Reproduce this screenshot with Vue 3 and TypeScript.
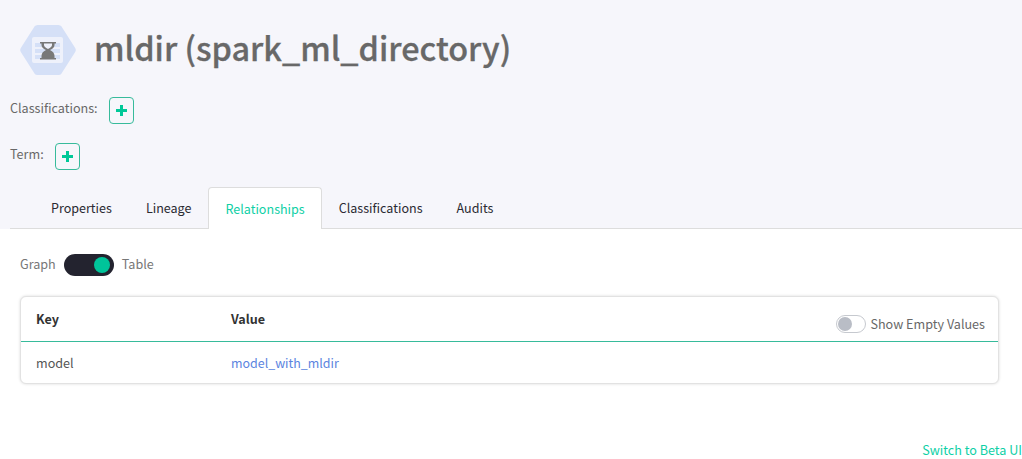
<script setup lang="ts">
const tabs: string[] = ['Properties', 'Lineage', 'Relationships', 'Classifications', 'Audits']
const active = 'Relationships'
</script>

<template>
  <div class="page">
    <header class="head">
      <div class="title-row">
        <svg class="entity-icon" width="56" height="50" viewBox="0 0 56 50">
          <path d="M14.500 1.500 Q15.500 0 17.500 0 H38.500 Q40.500 0 41.500 1.500 L55.200 23 Q56.300 25 55.200 27 L41.500 48.500 Q40.500 50 38.500 50 H17.500 Q15.500 50 14.500 48.500 L0.800 27 Q-0.300 25 0.800 23 Z" fill="#d5e0f7" />
          <rect x="12" y="12" width="31" height="26" rx="2" fill="#eef1fb" />
          <rect x="15" y="18" width="25" height="4" fill="#d5e0f7" />
          <rect x="15" y="24" width="25" height="4" fill="#d5e0f7" />
          <rect x="15" y="30" width="25" height="4" fill="#d5e0f7" />
          <path d="M20 17 H36 V18.500 H34.500 V20 Q34.500 23 30 25 Q34.500 27 34.500 31 V33 H36 V34.500 H20 V33 H21.500 V31 Q21.500 27 26 25 Q21.500 23 21.500 20 V18.500 H20 Z" fill="#787878" />
          <path d="M24 18.500 H32 V20 Q32 22 28 24 Q24 22 24 20 Z" fill="#eef1fb" />
        </svg>
        <h1 class="title">mldir (spark_ml_directory)</h1>
      </div>
      <div class="tag-row cls-row">
        <span class="tag-label">Classifications:</span>
        <button class="add-btn" type="button">
          <svg width="11" height="11" viewBox="0 0 11 11"><path d="M4 0 H7 V4 H11 V7 H7 V11 H4 V7 H0 V4 H4 Z" fill="#00c898" /></svg>
        </button>
      </div>
      <div class="tag-row term-row">
        <span class="tag-label">Term:</span>
        <button class="add-btn" type="button">
          <svg width="11" height="11" viewBox="0 0 11 11"><path d="M4 0 H7 V4 H11 V7 H7 V11 H4 V7 H0 V4 H4 Z" fill="#00c898" /></svg>
        </button>
      </div>
      <nav class="tabs">
        <a v-for="t in tabs" :key="t" class="tab" :class="{ on: t === active }">{{ t }}</a>
      </nav>
    </header>

    <main class="body">
      <div class="switch-row">
        <span>Graph</span>
        <span class="big-switch"><i></i></span>
        <span>Table</span>
      </div>
      <section class="card">
        <div class="thead">
          <div class="col-key">Key</div>
          <div class="col-val">Value</div>
          <div class="empty-toggle">
            <span class="small-switch"><i></i></span>
            <span>Show Empty Values</span>
          </div>
        </div>
        <div class="trow">
          <div class="col-key">model</div>
          <a class="col-val link">model_with_mldir</a>
        </div>
      </section>
    </main>

    <footer class="foot"><a>Switch to Beta UI</a></footer>
  </div>
</template>

<style>
html, body { margin: 0; background: #fff; }
</style>

<style scoped>
.page {
  width: 1022px;
  height: 459px;
  overflow: hidden;
  font-family: "Noto Sans CJK SC", "Noto Sans", sans-serif;
  font-size: 12.6px;
  line-height: 18px;
  color: #686868;
  display: flex;
  flex-direction: column;
}
.head {
  background: #f6f6fb;
  height: 229px;
  box-sizing: border-box;
  display: flex;
  flex-direction: column;
}
.title-row {
  display: flex;
  align-items: center;
  gap: 18px;
  padding: 25px 0 0 20px;
  height: 50px;
}
.title {
  margin: 0 0 6px;
  font-size: 32.4px;
  font-weight: 500;
  line-height: 46px;
  color: #686868;
  white-space: nowrap;
  -webkit-text-stroke: 0.3px #686868;
}
.tag-row {
  display: flex;
  align-items: center;
  padding-left: 10px;
  height: 27px;
}
.tag-label { margin-bottom: 5px; }
.cls-row { margin-top: 22px; gap: 11px; }
.term-row { margin-top: 19px; gap: 11px; }
.add-btn {
  width: 25px;
  height: 27px;
  box-sizing: border-box;
  padding: 0;
  border: 1px solid #37bb9b;
  border-radius: 4px;
  background: transparent;
  display: flex;
  align-items: center;
  justify-content: center;
}
.tabs {
  margin: 17px 0 0 10px;
  height: 42px;
  box-sizing: border-box;
  display: flex;
  border-bottom: 1px solid #dddddd;
  padding-left: 24px;
}
.tab {
  padding: 0 17px;
  font-size: 12.55px;
  line-height: 42px;
  color: #2a2a32;
  white-space: nowrap;
}
.tab.on {
  color: #0fd0a6;
  background: #fff;
  border: 1px solid #dddddd;
  border-bottom: none;
  border-radius: 4px 4px 0 0;
  height: 42px;
  padding: 0 16px;
  line-height: 41px;
  box-sizing: border-box;
}
.body {
  flex: 1;
  padding: 0 23px 0 20px;
  position: relative;
}
.switch-row {
  display: flex;
  align-items: center;
  gap: 8px;
  height: 24px;
  margin-top: 23px;
  color: #777;
}
.big-switch {
  width: 50px;
  height: 22px;
  margin-top: 2px;
  border-radius: 11px;
  background: #23232f;
  position: relative;
}
.big-switch i {
  position: absolute;
  right: 4px;
  top: 3px;
  width: 16px;
  height: 16px;
  border-radius: 50%;
  background: #00c49a;
}
.card {
  margin-top: 20px;
  border: 1px solid #e2e2e2;
  border-radius: 6px;
  background: #fff;
  box-shadow: 0 0 3px rgba(0, 0, 0, 0.15);
}
.thead {
  display: flex;
  height: 45px;
  box-sizing: border-box;
  border-bottom: 1px solid #37bb9b;
  position: relative;
  align-items: center;
  color: #333;
  font-weight: 700;
}
.trow {
  display: flex;
  height: 41px;
  align-items: center;
  color: #555;
}
.col-key { width: 210px; padding-left: 15px; box-sizing: border-box; }
.col-val { white-space: nowrap; }
.link { color: #5b84e0; font-size: 12.45px; }
.empty-toggle {
  position: absolute;
  right: 13px;
  top: 18px;
  display: flex;
  align-items: center;
  gap: 4px;
  font-weight: 400;
  color: #686868;
}
.small-switch {
  width: 30px;
  height: 18px;
  box-sizing: border-box;
  border: 1px solid #c6c9cf;
  border-radius: 9px;
  position: relative;
}
.small-switch i {
  position: absolute;
  left: 1px;
  top: 1px;
  width: 14px;
  height: 14px;
  border-radius: 50%;
  background: #b9bdc6;
}
.foot {
  position: absolute;
  right: 0;
  top: 441px;
  color: #0fd0a6;
  line-height: 18px;
  white-space: nowrap;
}
</style>
